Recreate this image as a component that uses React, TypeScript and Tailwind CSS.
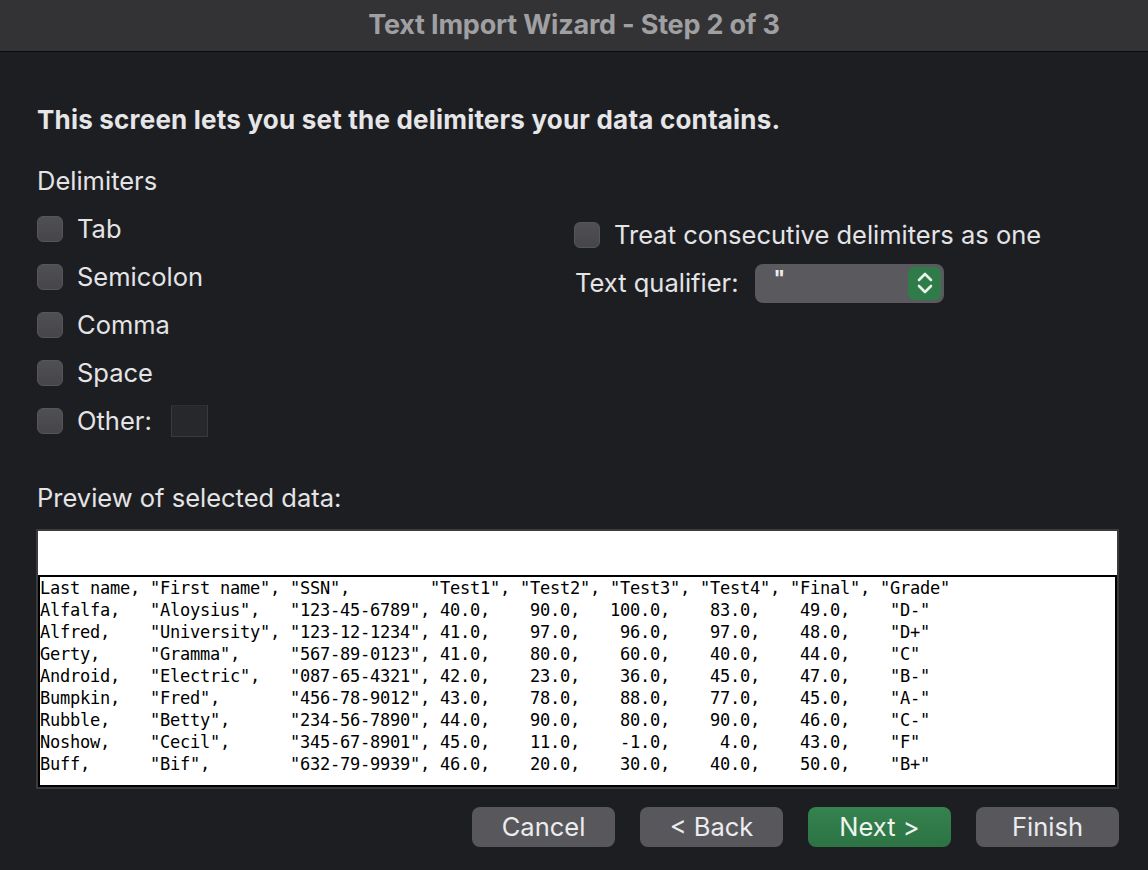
import React from "react"

type Row = {
  last: string
  first: string
  ssn: string
  scores: string[]
  grade: string
}

const ROWS: Row[] = [
  { last: "Alfalfa", first: "Aloysius", ssn: "123-45-6789", scores: ["40.0", "90.0", "100.0", "83.0", "49.0"], grade: "D-" },
  { last: "Alfred", first: "University", ssn: "123-12-1234", scores: ["41.0", "97.0", "96.0", "97.0", "48.0"], grade: "D+" },
  { last: "Gerty", first: "Gramma", ssn: "567-89-0123", scores: ["41.0", "80.0", "60.0", "40.0", "44.0"], grade: "C" },
  { last: "Android", first: "Electric", ssn: "087-65-4321", scores: ["42.0", "23.0", "36.0", "45.0", "47.0"], grade: "B-" },
  { last: "Bumpkin", first: "Fred", ssn: "456-78-9012", scores: ["43.0", "78.0", "88.0", "77.0", "45.0"], grade: "A-" },
  { last: "Rubble", first: "Betty", ssn: "234-56-7890", scores: ["44.0", "90.0", "80.0", "90.0", "46.0"], grade: "C-" },
  { last: "Noshow", first: "Cecil", ssn: "345-67-8901", scores: ["45.0", "11.0", "-1.0", "4.0", "43.0"], grade: "F" },
  { last: "Buff", first: "Bif", ssn: "632-79-9939", scores: ["46.0", "20.0", "30.0", "40.0", "50.0"], grade: "B+" },
]

const HEADER = 'Last name, "First name", "SSN",        "Test1", "Test2", "Test3", "Test4", "Final", "Grade"'

// fixed-width columns, numbers right aligned like the csv preview
const formatRow = (r: Row) =>
  `${r.last},`.padEnd(11) +
  `"${r.first}",`.padEnd(14) +
  `"${r.ssn}",` +
  r.scores.map((s) => s.padStart(5) + ",").join("   ") +
  "    " +
  `"${r.grade}"`

const LINES = [HEADER, ...ROWS.map(formatRow)]

const Checkbox = () => (
  <div className="w-[26px] h-[26px] rounded-[6px] bg-gradient-to-b from-[#505054] to-[#46464a] border border-[#56565a] shrink-0" />
)

const CheckRow = ({ label, children }: { label: string; children?: React.ReactNode }) => (
  <div className="h-12 flex items-center">
    <Checkbox />
    <span className="ml-[14px] text-[25.5px] text-[#e4e4e6]">{label}</span>
    {children}
  </div>
)

const Button = ({ label, primary }: { label: string; primary?: boolean }) => (
  <button
    className={
      primary
        ? "w-[143px] h-[40px] rounded-[8px] bg-gradient-to-b from-[#35834f] to-[#2c7344] text-[25.5px] text-[#eef4ef]"
        : "w-[143px] h-[40px] rounded-[8px] bg-[#58585c] text-[25.5px] text-[#ececee]"
    }
  >
    {label}
  </button>
)

const App = () => {
  return (
    <div className="w-[1148px] h-[870px] bg-[#1d1e21] font-['Inter',sans-serif] overflow-hidden">
      {/* Title bar */}
      <div className="h-[52px] bg-[#333336] border-b border-[#0c0c0e] flex items-center justify-center">
        <span className="text-[27px] font-bold text-[#a0a0a2] tracking-[-0.2px]">Text Import Wizard - Step 2 of 3</span>
      </div>

      <div className="pl-[37px] pr-[29px]">
        <p className="mt-[52px] h-8 leading-8 text-[26px] font-bold text-[#e6e6e8] tracking-[0.2px] whitespace-nowrap">
          This screen lets you set the delimiters your data contains.
        </p>

        <p className="mt-[29px] h-8 leading-8 text-[25.5px] text-[#e4e4e6]">Delimiters</p>

        <div className="mt-2 grid grid-cols-[537px_1fr]">
          <div className="flex flex-col">
            <CheckRow label="Tab" />
            <CheckRow label="Semicolon" />
            <CheckRow label="Comma" />
            <CheckRow label="Space" />
            <CheckRow label="Other:">
              <div className="ml-[19px] w-[37px] h-[32px] bg-[#27282b] border border-[#3a3a3d] border-t-[#2f2f32]" />
            </CheckRow>
          </div>

          <div className="mt-[6px] flex flex-col">
            <CheckRow label="Treat consecutive delimiters as one" />
            <div className="h-12 flex items-center">
              <span className="ml-px text-[25.5px] text-[#e4e4e6]">Text qualifier:</span>
              <div className="ml-[17px] w-[189px] h-[39px] rounded-[8px] bg-[#5a5a5e] flex items-start justify-between pl-[18px] pr-[3px] pt-[3px]">
                <span className="text-[21px] font-bold text-[#eeeeee] leading-6">"</span>
                <div className="w-[33px] h-[33px] rounded-[6px] bg-[#2f7b49] flex items-center justify-center">
                  <svg width="20" height="26" viewBox="0 0 20 26" fill="none" stroke="#e8f2ea" strokeWidth="2.6" strokeLinecap="round" strokeLinejoin="round">
                    <path d="M4 10 L10 4 L16 10" />
                    <path d="M4 16 L10 22 L16 16" />
                  </svg>
                </div>
              </div>
            </div>
          </div>
        </div>

        <p className="mt-[37px] h-8 leading-8 text-[25.5px] text-[#e4e4e6]">Preview of selected data:</p>

        {/* Preview */}
        <div className="mt-[15px] -ml-px h-[260px] border-2 border-[#3b3b3e] bg-white flex flex-col">
          <div className="h-[44px] shrink-0" />
          <div className="flex-1 border-2 border-black overflow-hidden">
            <pre className="font-['DejaVu_Sans_Mono',monospace] text-[17px] tracking-[-0.234px] leading-[22px] text-black">
              {LINES.join("\n")}
            </pre>
          </div>
        </div>

        <div className="mt-[18px] flex justify-end gap-[25px]">
          <Button label="Cancel" />
          <Button label="< Back" />
          <Button label="Next >" primary />
          <Button label="Finish" />
        </div>
      </div>
    </div>
  )
}

export default App
